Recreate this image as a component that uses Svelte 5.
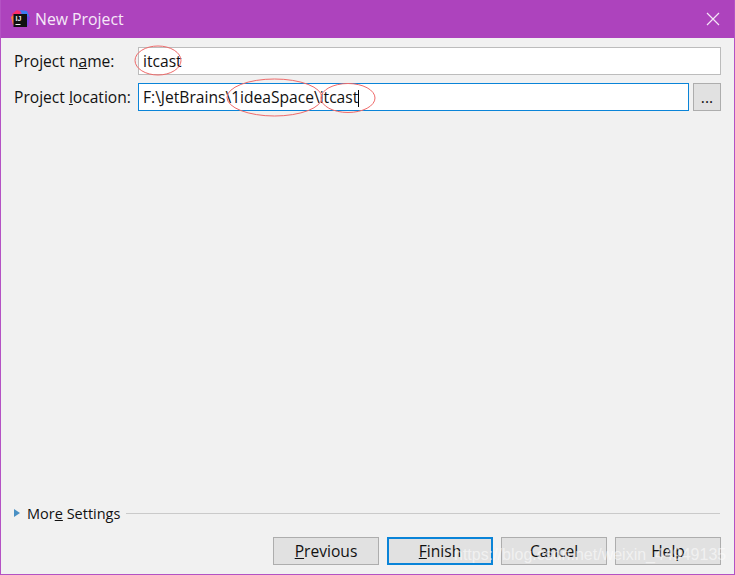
<script>
  const buttons = [
    { key: "P", post: "revious" },
    { key: "F", post: "inish", focus: true },
    { key: "", post: "Cancel" },
    { key: "", post: "Help" }
  ];
</script>

<div class="dialog">
  <header class="titlebar">
    <svg class="logo" width="20" height="20" viewBox="0 0 20 20">
      <path d="M2 5 L7 1 L11 3 L7 9 L3 10 Z" fill="#fc2d6c" />
      <path d="M1 8 L5 5 L7 14 L3 16 Z" fill="#fe7a3c" />
      <path d="M10 1 L17 2 L20 9 L14 9 Z" fill="#3d7bf0" />
      <path d="M14 6 L20 8 L18 17 L12 18 Z" fill="#7a45e0" />
      <rect x="3.5" y="5" width="13.5" height="13" fill="#111" />
      <text x="5.5" y="12" class="logo-text">IJ</text>
      <rect x="5.5" y="15" width="5" height="1" fill="#eee" />
    </svg>
    <span class="title">New Project</span>
    <svg class="close" width="14" height="14" viewBox="0 0 14 14">
      <path d="M1 1 L13 13 M13 1 L1 13" stroke="#f4e6f6" stroke-width="1.2" fill="none" />
    </svg>
  </header>

  <main class="body">
    <div class="row">
      <label class="label" for="pname">Project n<u>a</u>me:</label>
      <div class="field" id="pname">itcast</div>
    </div>
    <div class="row second">
      <label class="label" for="ploc">Project <u>l</u>ocation:</label>
      <div class="field active" id="ploc">F:\JetBrains\1ideaSpace\itcast<span class="caret"></span></div>
      <button class="browse"><span>...</span></button>
    </div>

    <div class="spacer"></div>

    <div class="more">
      <span class="arrow"></span>
      <span class="more-label">Mor<u>e</u> Settings</span>
      <span class="line"></span>
    </div>

    <div class="actions">
      {#each buttons as b}
        <button class="btn" class:focus={b.focus}>{#if b.key}<u>{b.key}</u>{/if}{b.post}</button>
      {/each}
    </div>
  </main>

  <svg class="marks" width="735" height="575" viewBox="0 0 735 575">
    <ellipse cx="158" cy="60.5" rx="23" ry="14.5" />
    <ellipse cx="274.5" cy="97.5" rx="47.5" ry="18.5" />
    <ellipse cx="348" cy="98" rx="27" ry="14.5" />
  </svg>
  <div class="watermark">https://blog.csdn.net/weixin_44949135</div>
</div>

<style>
  :global(body) {
    margin: 0;
  }
  .dialog {
    position: relative;
    width: 735px;
    height: 575px;
    box-sizing: border-box;
    border: 1px solid #b452c4;
    border-top: 0;
    background: #f1f1f1;
    display: flex;
    flex-direction: column;
    font-family: "Open Sans", "Noto Sans", sans-serif;
    font-size: 15.6px;
    color: #111;
    overflow: hidden;
  }
  .titlebar {
    height: 38px;
    flex: none;
    margin: 0 -1px;
    background: #ad43bd;
    display: flex;
    align-items: center;
    padding: 0 15px 0 10px;
    color: #f6e9f8;
  }
  .logo {
    margin-right: 5px;
  }
  .logo-text {
    font-family: "Liberation Sans", sans-serif;
    font-size: 7px;
    font-weight: bold;
    fill: #eee;
  }
  .title {
    font-size: 15.8px;
    flex: 1;
  }
  .body {
    flex: 1;
    display: flex;
    flex-direction: column;
    padding: 9px 13px 9px 13px;
  }
  .row {
    display: flex;
    align-items: center;
    height: 28px;
  }
  .second {
    margin-top: 8px;
  }
  .label {
    width: 124px;
    flex: none;
    white-space: nowrap;
  }
  .field {
    flex: 1;
    height: 28px;
    box-sizing: border-box;
    border: 1px solid #bcbcbc;
    background: #fff;
    padding-left: 4px;
    line-height: 26px;
    white-space: nowrap;
  }
  .field.active {
    border-color: #0a84d8;
  }
  .caret {
    display: inline-block;
    width: 1px;
    height: 17px;
    background: #000;
    vertical-align: -4px;
  }
  .browse {
    width: 28px;
    height: 28px;
    margin-left: 4px;
    flex: none;
    border: 1px solid #adadad;
    background: #e1e1e1;
    padding: 0;
    font: inherit;
    color: #111;
  }
  .spacer {
    flex: 1;
  }
  .more {
    display: flex;
    align-items: center;
    height: 20px;
    font-size: 14.5px;
  }
  .arrow {
    width: 0;
    height: 0;
    border-left: 6px solid #4a90c4;
    border-top: 4.5px solid transparent;
    border-bottom: 4.5px solid transparent;
    margin-right: 7px;
  }
  .more-label {
    white-space: nowrap;
    margin-right: 6px;
  }
  .line {
    flex: 1;
    height: 1px;
    background: #cacaca;
    margin-right: 1px;
  }
  .actions {
    display: flex;
    justify-content: flex-end;
    gap: 8px;
    margin-top: 14px;
  }
  .btn {
    width: 106px;
    height: 28px;
    box-sizing: border-box;
    border: 1px solid #adadad;
    background: #e1e1e1;
    padding: 0;
    font: inherit;
    color: #111;
  }
  .btn.focus {
    border: 2px solid #0a84d8;
  }
  .marks {
    position: absolute;
    left: -1px;
    top: 0;
    pointer-events: none;
  }
  .marks ellipse {
    fill: none;
    stroke: #ef6a6a;
    stroke-width: 1;
  }
  .watermark {
    position: absolute;
    left: 453px;
    top: 546px;
    font-family: "Liberation Sans", sans-serif;
    font-size: 16px;
    color: rgba(255, 255, 255, 0.55);
    white-space: nowrap;
    pointer-events: none;
  }
</style>
